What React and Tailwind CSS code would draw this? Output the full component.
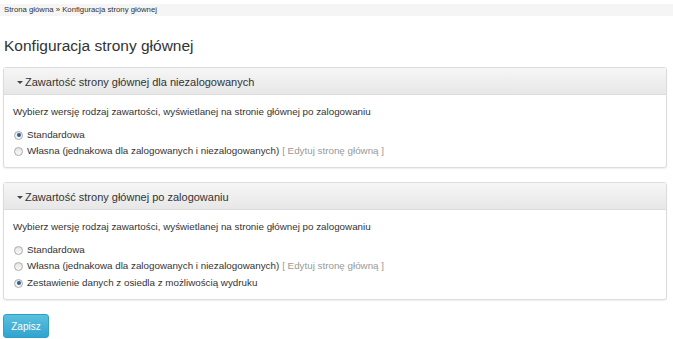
import React from "react";

function Radio({ checked }) {
  return (
    <span className="inline-flex items-center justify-center w-[9px] h-[9px] rounded-full border border-[#aaa] bg-gradient-to-b from-[#e4e4e4] to-[#fafafa] mr-[4px] shrink-0">
      {checked && <span className="w-[4px] h-[4px] rounded-full bg-[#2d5f93]" />}
    </span>
  );
}

function Option({ checked, children, edit }) {
  return (
    <div className="flex items-center h-[16.5px] pl-[1px] whitespace-nowrap">
      <Radio checked={checked} />
      <span className="text-[#333]">{children}</span>
      {edit && <span className="text-[#999] ml-[3px]">[ Edytuj stronę główną ]</span>}
    </div>
  );
}

function Panel({ title, children }) {
  return (
    <div className="ml-[3px] mr-[6px] border border-[#dcdcdc] rounded-[3px] shadow-[0_1px_2px_rgba(0,0,0,0.07)] bg-white">
      <div className="h-[27px] flex items-center px-[13px] pt-[2px] bg-gradient-to-b from-[#f6f6f6] to-[#e7e7e7] border-b border-[#dcdcdc] text-[11px] text-[#333]">
        <span className="w-0 h-0 border-l-[3px] border-r-[3px] border-t-[3.5px] border-l-transparent border-r-transparent border-t-[#444] mr-[2px] mt-[1px]" />
        {title}
      </div>
      <div className="px-[9px] pt-[10px] pb-[7px] text-[9.8px]">
        <div className="text-[#333] leading-[13px] mb-[9px] whitespace-nowrap">Wybierz wersję rodzaj zawartości, wyświetlanej na stronie głównej po zalogowaniu</div>
        {children}
      </div>
    </div>
  );
}

export default function App() {
  return (
    <div className="w-[673px] h-[339px] bg-white overflow-hidden" style={{ fontFamily: '"Liberation Sans", Arial, sans-serif' }}>
      <div className="h-[12px] mt-[4px] bg-[#f5f5f5] text-[7.75px] leading-[12px] px-[4px] text-[#333]">
        Strona główna » Konfiguracja strony głównej
      </div>
      <h1 className="text-[15.5px] text-[#333] px-[4px] mt-[20px] mb-[11px] leading-[20px]">Konfiguracja strony głównej</h1>
      <Panel title="Zawartość strony głównej dla niezalogowanych">
        <Option checked>Standardowa</Option>
        <Option edit>Własna (jednakowa dla zalogowanych i niezalogowanych)</Option>
      </Panel>
      <div className="h-[14px]" />
      <Panel title="Zawartość strony głównej po zalogowaniu">
        <Option>Standardowa</Option>
        <Option edit>Własna (jednakowa dla zalogowanych i niezalogowanych)</Option>
        <Option checked>Zestawienie danych z osiedla z możliwością wydruku</Option>
      </Panel>
      <div className="px-[3px] mt-[13px]">
        <button className="w-[46px] h-[24px] rounded-[3px] bg-gradient-to-b from-[#5bc0de] to-[#2fa4cf] border border-[#2aa2cc] text-white text-[10px]">Zapisz</button>
      </div>
    </div>
  );
}
